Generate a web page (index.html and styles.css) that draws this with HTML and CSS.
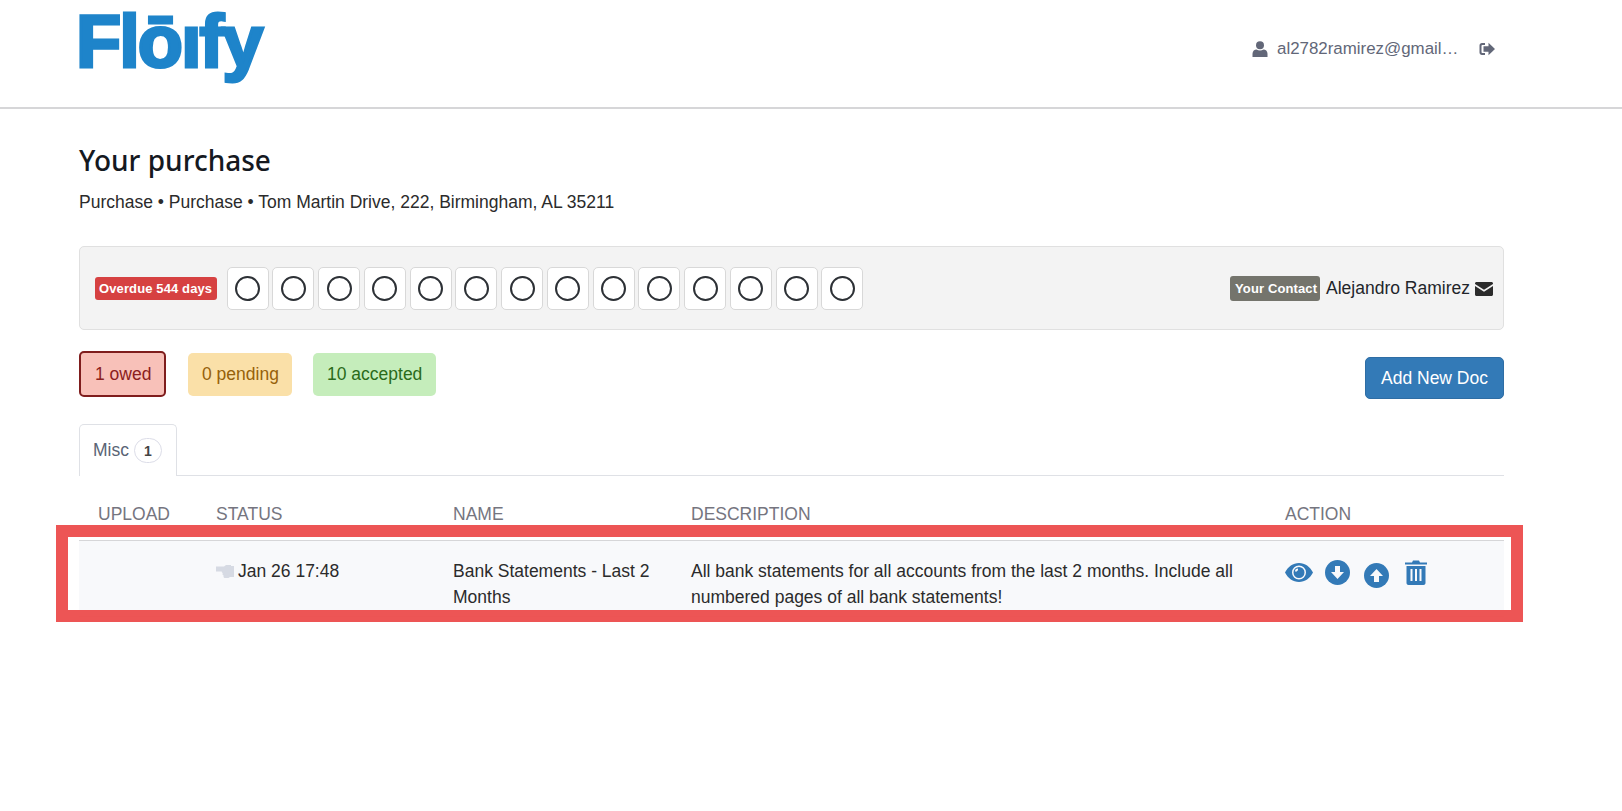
FILE: index.html
```html
<!DOCTYPE html>
<html lang="en">
<head>
<meta charset="utf-8">
<title>Floify</title>
<link rel="stylesheet" href="styles.css">
</head>
<body>
<header class="topbar">
  <div class="logo"><span class="logo-text">Flōıfy</span></div>
  <div class="account">
    <svg class="icon-user" viewBox="0 0 16 16"><circle cx="8" cy="4.2" r="4"/><path d="M0.5 16v-3.2C0.5 10 2.5 8.5 4.5 8.5c1 .7 2.2 1.1 3.5 1.1s2.500-.4 3.500-1.100c2 0 4 1.500 4 4.300V16z"/></svg>
    <span class="email">al2782ramirez@gmail…</span>
    <svg class="icon-logout" viewBox="0 0 16 14"><path d="M6 1H3C1.500 1 .5 2 .5 3.500v7C.5 12 1.500 13 3 13h3v-2H3.500c-.6 0-1-.4-1-1V4c0-.6.4-1 1-1H6z"/><path d="M9.500 .8L16 7l-6.500 6.200V9.700H4.500V4.300h5z"/></svg>
  </div>
</header>
<main class="content">
  <h1 class="title">Your purchase</h1>
  <p class="subtitle">Purchase • Purchase • Tom Martin Drive, 222, Birmingham, AL 35211</p>

  <section class="progress">
    <div class="progress-left">
      <span class="badge badge-red">Overdue 544 days</span>
      <div class="steps">
        <span class="step"><i class="ring"></i></span><span class="step"><i class="ring"></i></span><span class="step"><i class="ring"></i></span><span class="step"><i class="ring"></i></span><span class="step"><i class="ring"></i></span><span class="step"><i class="ring"></i></span><span class="step"><i class="ring"></i></span><span class="step"><i class="ring"></i></span><span class="step"><i class="ring"></i></span><span class="step"><i class="ring"></i></span><span class="step"><i class="ring"></i></span><span class="step"><i class="ring"></i></span><span class="step"><i class="ring"></i></span><span class="step"><i class="ring"></i></span>
      </div>
    </div>
    <div class="contact">
      <span class="badge badge-grey">Your Contact</span>
      <span class="contact-name">Alejandro Ramirez</span>
      <svg class="icon-mail" viewBox="0 0 18 14"><path d="M1.500 0h15C17.300 0 18 .7 18 1.500v.6L9 7.800 0 2.100v-.6C0 .7.700 0 1.500 0z"/><path d="M0 4l9 5.700L18 4v8.500c0 .8-.7 1.500-1.500 1.500h-15C.7 14 0 13.300 0 12.500z"/></svg>
    </div>
  </section>

  <section class="filters">
    <div class="filter-group">
      <span class="pill pill-owed">1 owed</span>
      <span class="pill pill-pending">0 pending</span>
      <span class="pill pill-accepted">10 accepted</span>
    </div>
    <button class="add-doc" type="button">Add New Doc</button>
  </section>

  <nav class="tabs">
    <div class="tab">Misc <span class="count">1</span></div>
  </nav>

  <div class="table">
    <div class="table-head">
      <span>Upload</span><span>Status</span><span>Name</span><span>Description</span><span>Action</span>
    </div>
    <div class="table-row">
      <span></span>
      <span class="status">
        <svg class="icon-hand" viewBox="0 0 18 14"><path d="M0 2.500h8L10 1h5v1h3v11h-4l-1.500 1H9c-1 0-1.500-.7-1.500-1.500 0-.4 0-.7.2-1-.7-.2-1.200-.8-1.200-1.500 0-.4.100-.7.300-1-.7-.2-1.100-.8-1.100-1.500H0z"/></svg>
        <span>Jan 26 17:48</span>
      </span>
      <span>Bank Statements - Last 2 Months</span>
      <span>All bank statements for all accounts from the last 2 months. Include all numbered pages of all bank statements!</span>
      <span class="actions">
        <svg class="icon-eye" viewBox="0 0 28 19"><path fill-rule="evenodd" d="M14 0c6 0 11 3.800 14 9.500C25 15.200 20 19 14 19S3 15.200 0 9.500C3 3.800 8 0 14 0zm0 2.500a7 7 0 1 0 0 14 7 7 0 0 0 0-14z"/><path fill-rule="evenodd" d="M14 4a5.500 5.500 0 1 1 0 11 5.500 5.500 0 0 1 0-11zm-1 1.500a3 3 0 0 0-3 3h2c0-.6.400-1 1-1z"/></svg>
        <svg class="icon-circle" viewBox="0 0 25 25"><circle cx="12.500" cy="12.500" r="12.500"/><path class="cut" d="M10 6h5v6h4l-6.500 7L6 12h4z"/></svg>
        <svg class="icon-circle icon-up" viewBox="0 0 25 25"><circle cx="12.500" cy="12.500" r="12.500"/><path class="cut" d="M10 19h5v-6h4L12.500 6 6 13h4z"/></svg>
        <svg class="icon-trash" viewBox="0 0 22 25"><path d="M7 2.500L8 .5h6l1 2h7v2H0v-2z"/><path fill-rule="evenodd" d="M1.500 6h19v17c0 1.100-.9 2-2 2h-15c-1.100 0-2-.9-2-2zM5.500 9v12h2V9zm4.500 0v12h2V9zm4.500 0v12h2V9z"/></svg>
      </span>
    </div>
  </div>
</main>
<div class="highlight"></div>
</body>
</html>
```
FILE: styles.css
```css
* { box-sizing: border-box; }
html, body { margin: 0; padding: 0; height: 100%; }
body {
  background: #fff;
  color: #2b2b2b;
  font-family: "Liberation Sans", Arial, sans-serif;
  font-size: 17.500px;
  overflow: hidden;
  position: relative;
}
.topbar {
  height: 109px;
  padding: 0 127px 0 79px;
  border-bottom: 2px solid #d6d6d8;
  display: flex;
  justify-content: space-between;
  align-items: flex-start;
}
.logo { height: 100px; width: 200px; }
.logo-text {
  display: inline-block;
  margin-left: -3px;
  color: #1e84ca;
  font-family: "Liberation Sans", Arial, sans-serif;
  font-weight: 700;
  font-size: 74px;
  line-height: 84px;
  letter-spacing: -2px;
  white-space: nowrap;
  -webkit-text-stroke: 3px #1e84ca;
}
.account {
  display: flex;
  align-items: center;
  color: #626778;
  margin-top: 39px;
  height: 20px;
}
.icon-user { width: 16px; height: 16px; fill: #626778; margin-right: 9px; }
.email { font-size: 16.900px; width: 202px; white-space: nowrap; }
.icon-logout { width: 16px; height: 14px; fill: #626778; }
.content { width: 1425px; margin-left: 79px; }
.title {
  font-family: "Noto Sans", "Open Sans", sans-serif;
  font-weight: 500;
  font-size: 28px;
  line-height: 36px;
  color: #15191f;
  margin: 33px 0 0;
}
.subtitle { margin: 13px 0 0; line-height: 22px; color: #2b2b2b; }
.progress {
  margin-top: 33px;
  height: 84px;
  background: #f3f3f3;
  border: 1px solid #e0e0e0;
  border-radius: 5px;
  display: flex;
  justify-content: space-between;
  align-items: center;
  padding: 0 10px 0 15px;
}
.progress-left { display: flex; align-items: center; gap: 9.500px; }
.badge {
  display: inline-block;
  color: #fff;
  font-weight: 700;
  font-size: 13px;
  line-height: 15px;
  border-radius: 3px;
  letter-spacing: .12px;
}
.badge-red { background: #d64141; padding: 4px 4px; height: 23px; width: 122px; white-space: nowrap; }
.steps { display: flex; gap: 3.750px; }
.step {
  width: 42px;
  height: 43px;
  background: #fff;
  border: 1px solid #d8d8d8;
  border-radius: 5px;
  display: flex;
  align-items: center;
  justify-content: center;
}
.ring {
  display: block;
  width: 25px;
  height: 25px;
  border: 2.500px solid #2d3136;
  border-radius: 50%;
}
.contact { display: flex; align-items: center; }
.badge-grey { background: #74746c; padding: 5px 5px; height: 25px; width: 90px; white-space: nowrap; margin-right: 6px; }
.contact-name { color: #22252a; margin-right: 5px; }
.icon-mail { width: 18px; height: 14px; fill: #2b2b2b; margin-top: 2px; }
.filters {
  margin-top: 21px;
  display: flex;
  justify-content: space-between;
  align-items: flex-start;
}
.filter-group { display: flex; align-items: center; gap: 22px; height: 46px; }
.filter-group .pill + .pill + .pill { margin-left: -1px; }
.pill {
  display: flex;
  align-items: center;
  height: 43px;
  padding: 0 14px;
  border-radius: 5px;
  white-space: nowrap;
}
.pill-owed { height: 46px; background: #f8c1b9; color: #8b2020; border: 2px solid #7f1d1d; padding: 0 14px; width: 87px; }
.pill-pending { background: #fae0a8; color: #96610a; width: 104px; }
.pill-accepted { background: #c5edbb; color: #2a6a1a; width: 123px; }
.add-doc {
  margin-top: 6px;
  width: 139px;
  height: 42px;
  border: 1px solid #2e6da4;
  border-radius: 5px;
  background: #337ab7;
  color: #fff;
  font: 17.500px "Liberation Sans", Arial, sans-serif;
}
.tabs { margin-top: 25px; height: 52px; border-bottom: 1px solid #dfe1e6; }
.tab {
  width: 98px;
  height: 52px;
  background: #fff;
  border: 1px solid #dfe1e6;
  border-bottom: 0;
  border-radius: 5px 5px 0 0;
  color: #5a6475;
  display: flex;
  align-items: center;
  padding: 0 0 0 13px;
  gap: 5px;
}
.count {
  width: 28px;
  height: 25px;
  border: 1px solid #dcdde8;
  border-radius: 13px;
  text-align: center;
  font-weight: 700;
  font-size: 14px;
  line-height: 24px;
  color: #444;
}
.table-head, .table-row {
  display: grid;
  grid-template-columns: 137px 237px 238px 594px 219px;
}
.table-head {
  height: 65px;
  padding-top: 28px;
  color: #75757f;
  text-transform: uppercase;
  line-height: 20px;
  border-bottom: 1px solid #d6d6d8;
}
.table-head span:first-child { padding-left: 19px; }
.table-row {
  background: #f8f9fb;
  height: 76px;
  padding-top: 17px;
  line-height: 26px;
  border-bottom: 1px solid #d6d6d8;
  color: #2b2b2b;
}
.table-row > span:nth-child(3) { padding-right: 30px; }
.table-row > span:nth-child(4) { padding-right: 40px; }
.status { display: flex; align-items: flex-start; gap: 4px; }
.icon-hand { width: 18px; height: 14px; fill: #d6dae3; margin-top: 6px; }
.actions { display: flex; align-items: flex-start; margin-top: 2px; }
.actions svg { fill: #337ab7; flex: none; }
.icon-eye { width: 28px; height: 19px; margin-top: 3px; margin-right: 12px; }
.icon-circle { width: 25px; height: 25px; margin-right: 14px; }
.icon-up { margin-top: 3px; }
.actions .cut { fill: #f8f9fb; }
.icon-trash { width: 22px; height: 25px; margin-left: 2px; }
.highlight {
  position: absolute;
  left: 56px;
  top: 525px;
  width: 1467px;
  height: 97px;
  border: 12px solid rgba(236, 80, 80, .97);
}
```
